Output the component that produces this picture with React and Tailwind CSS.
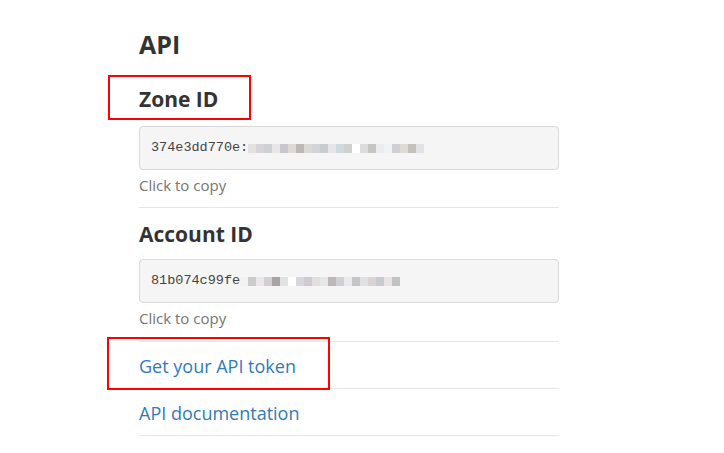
import React from 'react';

const Blur = ({ cells }) => (
  <span className="inline-flex items-center align-middle">
    {cells.map((c, i) => (
      <span key={i} className="inline-block h-[9px] w-[8px]" style={{ backgroundColor: c }} />
    ))}
  </span>
);

const zoneCells = ['#e4e2e0', '#d6d4d8', '#cfcfd6', '#e8e6e6', '#c9c7cc', '#ded9d6', '#bdb8b6', '#dcd8d4', '#d3d4d8', '#c8ccd0', '#e6e6ea', '#cfd9e0', '#d0d0d0', '#ffffff', '#dcdcde', '#c7c5c4', '#ececee', '#eef3f5', '#d0d0d2', '#dedad6', '#c4c0bc', '#e2e2e6'];
const accountCells = ['#f2f2f2', '#cbcbcb', '#e9e7e9', '#d2ced2', '#a9a3a5', '#e2e2e4', '#ffffff', '#d7d7dc', '#cdcbd0', '#e3dfe0', '#e7e7ea', '#bcb8b9', '#cfcfd4', '#ebebed', '#c5c4c6', '#e1e1e3', '#d9d3d6', '#c8cacd', '#e8e4e4', '#c2c2c2'];

const IdField = ({ prefix, cells, className }) => (
  <div className={`flex h-[44px] w-[420px] items-center rounded-[4px] border border-[#d9d9d9] bg-[#f5f5f5] px-[11px] text-[13.5px] text-[#444] [font-family:'Liberation_Mono',monospace] ${className}`}>
    <span>{prefix}</span>
    <Blur cells={cells} />
  </div>
);

export default function App() {
  return (
    <div className="min-h-[453px] bg-white pl-[139px] pt-[26px] text-[#333] [font-family:'Open_Sans',sans-serif]">
      <div className="w-[420px]">
        <h1 className="text-[25px] font-bold leading-[36px]">API</h1>

        <div className="-ml-[31px] mt-[13px] flex h-[45px] w-[143px] items-center border-2 border-[#f00] pl-[29px] pt-[3px]">
          <h2 className="text-[21px] font-bold leading-none">Zone ID</h2>
        </div>
        <IdField prefix="374e3dd770e:" cells={zoneCells} className="mt-[6px]" />
        <div className="border-b border-[#e6e6e6] pb-[11px] pt-[5px] text-[15px] leading-[21px] text-[#757575]">Click to copy</div>

        <h2 className="mt-[15px] text-[21px] font-bold leading-[22px]">Account ID</h2>
        <IdField prefix="81b074c99fe" cells={accountCells} className="mt-[14px]" />
        <div className="border-b border-[#e6e6e6] pb-[12px] pt-[5px] text-[15px] leading-[21px] text-[#757575]">Click to copy</div>

        <div className="relative flex h-[47px] items-center border-b border-[#e6e6e6] pt-[1px]">
          <div className="absolute -left-[32px] -top-[5px] h-[53px] w-[223px] border-2 border-[#f00]" />
          <a className="text-[18px] leading-none text-[#2f7bb8]">Get your API token</a>
        </div>
        <div className="flex h-[47px] items-center border-b border-[#e6e6e6] pt-[1px]">
          <a className="text-[18px] leading-none text-[#2f7bb8]">API documentation</a>
        </div>
      </div>
    </div>
  );
}
